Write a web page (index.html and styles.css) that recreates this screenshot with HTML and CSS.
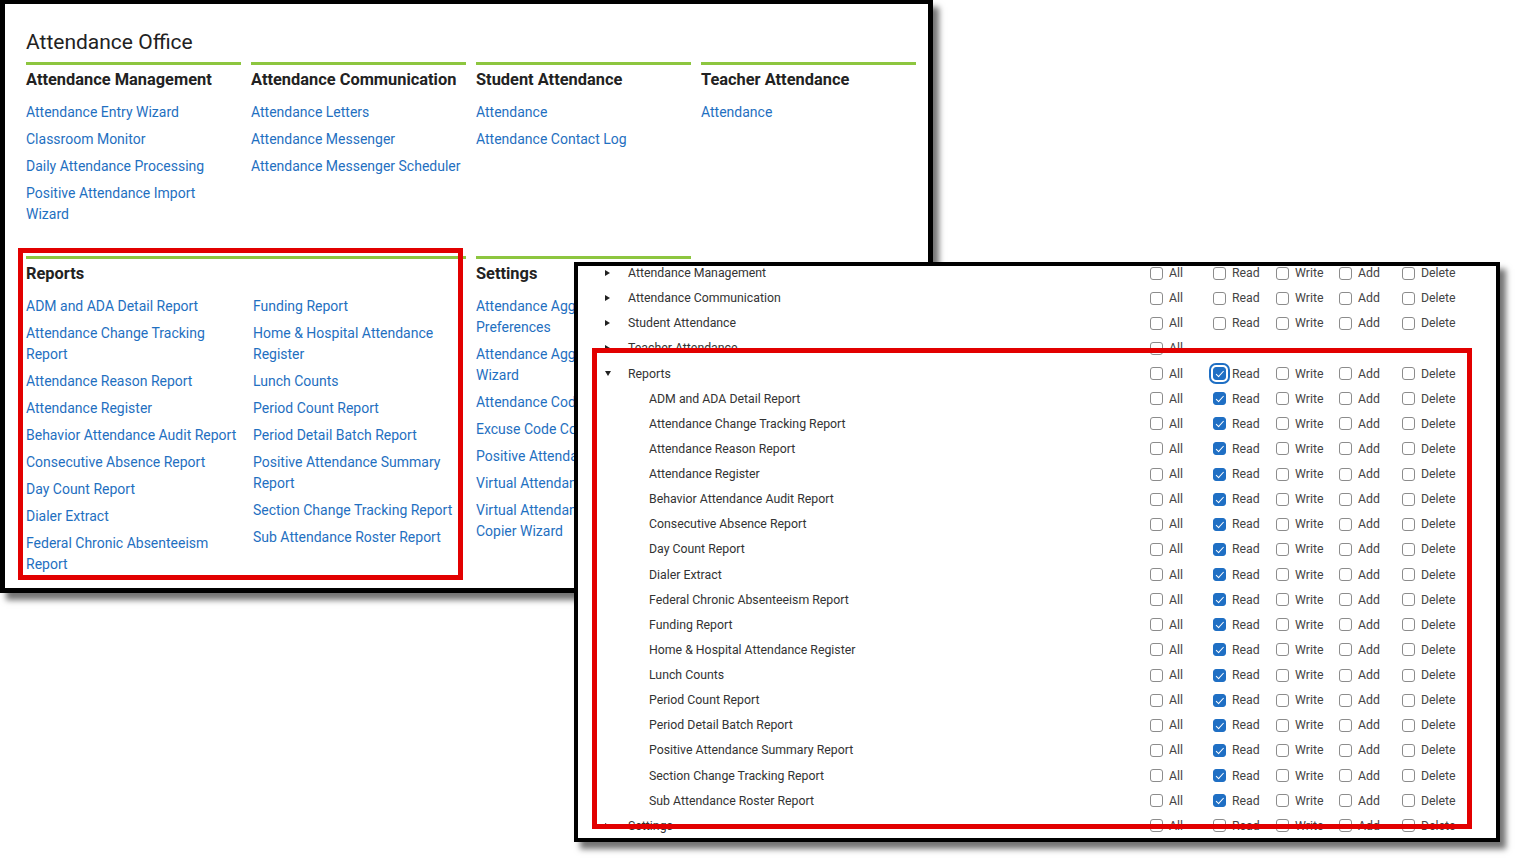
FILE: index.html
```html
<!DOCTYPE html>
<html>
<head>
  <meta charset="UTF-8">
  <title>Attendance Office Tool Rights</title>
  <link rel="stylesheet" href="styles.css">
</head>
<body>
  <div class="canvas">

    <!-- menu window -->
    <section class="window office">
      <h1 class="office-title">Attendance Office</h1>
      <div class="menu-grid">
        <div class="menu-group">
          <h2>Attendance Management</h2>
          <ul class="menu-links">
            <li><a href="#">Attendance Entry Wizard</a></li>
            <li><a href="#">Classroom Monitor</a></li>
            <li><a href="#">Daily Attendance Processing</a></li>
            <li><a href="#">Positive Attendance Import Wizard</a></li>
          </ul>
        </div>
        <div class="menu-group">
          <h2>Attendance Communication</h2>
          <ul class="menu-links">
            <li><a href="#">Attendance Letters</a></li>
            <li><a href="#">Attendance Messenger</a></li>
            <li><a href="#">Attendance Messenger Scheduler</a></li>
          </ul>
        </div>
        <div class="menu-group">
          <h2>Student Attendance</h2>
          <ul class="menu-links">
            <li><a href="#">Attendance</a></li>
            <li><a href="#">Attendance Contact Log</a></li>
          </ul>
        </div>
        <div class="menu-group">
          <h2>Teacher Attendance</h2>
          <ul class="menu-links">
            <li><a href="#">Attendance</a></li>
          </ul>
        </div>

        <div class="menu-group wide">
          <h2>Reports</h2>
          <div class="link-columns">
            <ul class="menu-links">
              <li><a href="#">ADM and ADA Detail Report</a></li>
              <li><a href="#">Attendance Change Tracking Report</a></li>
              <li><a href="#">Attendance Reason Report</a></li>
              <li><a href="#">Attendance Register</a></li>
              <li><a href="#">Behavior Attendance Audit Report</a></li>
              <li><a href="#">Consecutive Absence Report</a></li>
              <li><a href="#">Day Count Report</a></li>
              <li><a href="#">Dialer Extract</a></li>
              <li><a href="#">Federal Chronic Absenteeism Report</a></li>
            </ul>
            <ul class="menu-links">
              <li><a href="#">Funding Report</a></li>
              <li><a href="#">Home &amp; Hospital Attendance Register</a></li>
              <li><a href="#">Lunch Counts</a></li>
              <li><a href="#">Period Count Report</a></li>
              <li><a href="#">Period Detail Batch Report</a></li>
              <li><a href="#">Positive Attendance Summary Report</a></li>
              <li><a href="#">Section Change Tracking Report</a></li>
              <li><a href="#">Sub Attendance Roster Report</a></li>
            </ul>
          </div>
        </div>
        <div class="menu-group">
          <h2>Settings</h2>
          <ul class="menu-links narrow">
            <li><a href="#">Attendance Aggregation Preferences</a></li>
            <li><a href="#">Attendance Aggregation Wizard</a></li>
            <li><a href="#">Attendance Codes</a></li>
            <li><a href="#">Excuse Code Copier</a></li>
            <li><a href="#">Positive Attendance</a></li>
            <li><a href="#">Virtual Attendance</a></li>
            <li><a href="#">Virtual Attendance Copier Wizard</a></li>
          </ul>
        </div>
      </div>
      <div class="callout office-callout"></div>
    </section>

    <!-- tool rights window -->
    <section class="window rights">
      <div class="tree">
        <div class="tree-list">

          <div class="tree-row">
            <div class="tree-name"><span class="caret"></span>Attendance Management</div>
            <label class="perm"><input type="checkbox">All</label>
            <label class="perm"><input type="checkbox">Read</label>
            <label class="perm"><input type="checkbox">Write</label>
            <label class="perm"><input type="checkbox">Add</label>
            <label class="perm"><input type="checkbox">Delete</label>
          </div>
          <div class="tree-row">
            <div class="tree-name"><span class="caret"></span>Attendance Communication</div>
            <label class="perm"><input type="checkbox">All</label>
            <label class="perm"><input type="checkbox">Read</label>
            <label class="perm"><input type="checkbox">Write</label>
            <label class="perm"><input type="checkbox">Add</label>
            <label class="perm"><input type="checkbox">Delete</label>
          </div>
          <div class="tree-row">
            <div class="tree-name"><span class="caret"></span>Student Attendance</div>
            <label class="perm"><input type="checkbox">All</label>
            <label class="perm"><input type="checkbox">Read</label>
            <label class="perm"><input type="checkbox">Write</label>
            <label class="perm"><input type="checkbox">Add</label>
            <label class="perm"><input type="checkbox">Delete</label>
          </div>
          <div class="tree-row">
            <div class="tree-name"><span class="caret"></span>Teacher Attendance</div>
            <label class="perm"><input type="checkbox">All</label>
          </div>
          <div class="tree-row">
            <div class="tree-name"><span class="caret open"></span>Reports</div>
            <label class="perm"><input type="checkbox">All</label>
            <label class="perm"><input type="checkbox" class="focused" checked>Read</label>
            <label class="perm"><input type="checkbox">Write</label>
            <label class="perm"><input type="checkbox">Add</label>
            <label class="perm"><input type="checkbox">Delete</label>
          </div>

          <div class="tree-row child">
            <div class="tree-name">ADM and ADA Detail Report</div>
            <label class="perm"><input type="checkbox">All</label>
            <label class="perm"><input type="checkbox" checked>Read</label>
            <label class="perm"><input type="checkbox">Write</label>
            <label class="perm"><input type="checkbox">Add</label>
            <label class="perm"><input type="checkbox">Delete</label>
          </div>
          <div class="tree-row child">
            <div class="tree-name">Attendance Change Tracking Report</div>
            <label class="perm"><input type="checkbox">All</label>
            <label class="perm"><input type="checkbox" checked>Read</label>
            <label class="perm"><input type="checkbox">Write</label>
            <label class="perm"><input type="checkbox">Add</label>
            <label class="perm"><input type="checkbox">Delete</label>
          </div>
          <div class="tree-row child">
            <div class="tree-name">Attendance Reason Report</div>
            <label class="perm"><input type="checkbox">All</label>
            <label class="perm"><input type="checkbox" checked>Read</label>
            <label class="perm"><input type="checkbox">Write</label>
            <label class="perm"><input type="checkbox">Add</label>
            <label class="perm"><input type="checkbox">Delete</label>
          </div>
          <div class="tree-row child">
            <div class="tree-name">Attendance Register</div>
            <label class="perm"><input type="checkbox">All</label>
            <label class="perm"><input type="checkbox" checked>Read</label>
            <label class="perm"><input type="checkbox">Write</label>
            <label class="perm"><input type="checkbox">Add</label>
            <label class="perm"><input type="checkbox">Delete</label>
          </div>
          <div class="tree-row child">
            <div class="tree-name">Behavior Attendance Audit Report</div>
            <label class="perm"><input type="checkbox">All</label>
            <label class="perm"><input type="checkbox" checked>Read</label>
            <label class="perm"><input type="checkbox">Write</label>
            <label class="perm"><input type="checkbox">Add</label>
            <label class="perm"><input type="checkbox">Delete</label>
          </div>
          <div class="tree-row child">
            <div class="tree-name">Consecutive Absence Report</div>
            <label class="perm"><input type="checkbox">All</label>
            <label class="perm"><input type="checkbox" checked>Read</label>
            <label class="perm"><input type="checkbox">Write</label>
            <label class="perm"><input type="checkbox">Add</label>
            <label class="perm"><input type="checkbox">Delete</label>
          </div>
          <div class="tree-row child">
            <div class="tree-name">Day Count Report</div>
            <label class="perm"><input type="checkbox">All</label>
            <label class="perm"><input type="checkbox" checked>Read</label>
            <label class="perm"><input type="checkbox">Write</label>
            <label class="perm"><input type="checkbox">Add</label>
            <label class="perm"><input type="checkbox">Delete</label>
          </div>
          <div class="tree-row child">
            <div class="tree-name">Dialer Extract</div>
            <label class="perm"><input type="checkbox">All</label>
            <label class="perm"><input type="checkbox" checked>Read</label>
            <label class="perm"><input type="checkbox">Write</label>
            <label class="perm"><input type="checkbox">Add</label>
            <label class="perm"><input type="checkbox">Delete</label>
          </div>
          <div class="tree-row child">
            <div class="tree-name">Federal Chronic Absenteeism Report</div>
            <label class="perm"><input type="checkbox">All</label>
            <label class="perm"><input type="checkbox" checked>Read</label>
            <label class="perm"><input type="checkbox">Write</label>
            <label class="perm"><input type="checkbox">Add</label>
            <label class="perm"><input type="checkbox">Delete</label>
          </div>
          <div class="tree-row child">
            <div class="tree-name">Funding Report</div>
            <label class="perm"><input type="checkbox">All</label>
            <label class="perm"><input type="checkbox" checked>Read</label>
            <label class="perm"><input type="checkbox">Write</label>
            <label class="perm"><input type="checkbox">Add</label>
            <label class="perm"><input type="checkbox">Delete</label>
          </div>
          <div class="tree-row child">
            <div class="tree-name">Home &amp; Hospital Attendance Register</div>
            <label class="perm"><input type="checkbox">All</label>
            <label class="perm"><input type="checkbox" checked>Read</label>
            <label class="perm"><input type="checkbox">Write</label>
            <label class="perm"><input type="checkbox">Add</label>
            <label class="perm"><input type="checkbox">Delete</label>
          </div>
          <div class="tree-row child">
            <div class="tree-name">Lunch Counts</div>
            <label class="perm"><input type="checkbox">All</label>
            <label class="perm"><input type="checkbox" checked>Read</label>
            <label class="perm"><input type="checkbox">Write</label>
            <label class="perm"><input type="checkbox">Add</label>
            <label class="perm"><input type="checkbox">Delete</label>
          </div>
          <div class="tree-row child">
            <div class="tree-name">Period Count Report</div>
            <label class="perm"><input type="checkbox">All</label>
            <label class="perm"><input type="checkbox" checked>Read</label>
            <label class="perm"><input type="checkbox">Write</label>
            <label class="perm"><input type="checkbox">Add</label>
            <label class="perm"><input type="checkbox">Delete</label>
          </div>
          <div class="tree-row child">
            <div class="tree-name">Period Detail Batch Report</div>
            <label class="perm"><input type="checkbox">All</label>
            <label class="perm"><input type="checkbox" checked>Read</label>
            <label class="perm"><input type="checkbox">Write</label>
            <label class="perm"><input type="checkbox">Add</label>
            <label class="perm"><input type="checkbox">Delete</label>
          </div>
          <div class="tree-row child">
            <div class="tree-name">Positive Attendance Summary Report</div>
            <label class="perm"><input type="checkbox">All</label>
            <label class="perm"><input type="checkbox" checked>Read</label>
            <label class="perm"><input type="checkbox">Write</label>
            <label class="perm"><input type="checkbox">Add</label>
            <label class="perm"><input type="checkbox">Delete</label>
          </div>
          <div class="tree-row child">
            <div class="tree-name">Section Change Tracking Report</div>
            <label class="perm"><input type="checkbox">All</label>
            <label class="perm"><input type="checkbox" checked>Read</label>
            <label class="perm"><input type="checkbox">Write</label>
            <label class="perm"><input type="checkbox">Add</label>
            <label class="perm"><input type="checkbox">Delete</label>
          </div>
          <div class="tree-row child">
            <div class="tree-name">Sub Attendance Roster Report</div>
            <label class="perm"><input type="checkbox">All</label>
            <label class="perm"><input type="checkbox" checked>Read</label>
            <label class="perm"><input type="checkbox">Write</label>
            <label class="perm"><input type="checkbox">Add</label>
            <label class="perm"><input type="checkbox">Delete</label>
          </div>

          <div class="tree-row">
            <div class="tree-name"><span class="caret"></span>Settings</div>
            <label class="perm"><input type="checkbox">All</label>
            <label class="perm"><input type="checkbox">Read</label>
            <label class="perm"><input type="checkbox">Write</label>
            <label class="perm"><input type="checkbox">Add</label>
            <label class="perm"><input type="checkbox">Delete</label>
          </div>

        </div>
      </div>
      <div class="callout rights-callout"></div>
    </section>

  </div>
</body>
</html>
```

FILE: styles.css
```css
:root {
  --frame: #000000;
  --green: #8dc63f;
  --link: #1f70c1;
  --heading: #222222;
  --tree-text: #333333;
  --box-border: #8c8c8c;
  --checked: #1f6fc4;
  --callout: #e20000;
  --window-shadow: 6px 7px 6px rgba(0, 0, 0, 0.55);
}

body {
  margin: 0;
  background: #ffffff;
  font-family: Roboto, "Liberation Sans", Arial, sans-serif;
}

.canvas {
  position: relative;
  width: 1521px;
  height: 864px;
  overflow: hidden;
}

/* two screenshots layered on the canvas */
.window {
  position: absolute;
  box-sizing: border-box;
  background: #ffffff;
  border: 5px solid var(--frame);
  box-shadow: var(--window-shadow);
}

.office {
  left: 0;
  top: 0;
  width: 933px;
  height: 593px;
  border-top-width: 4px;
  padding: 25px 12px 0 21px;
}

.rights {
  left: 574px;
  top: 262px;
  width: 926px;
  height: 580px;
  border-width: 4px;
}

.callout {
  position: absolute;
  box-sizing: border-box;
  border: 5px solid var(--callout);
  pointer-events: none;
}

.office-callout {
  left: 13px;
  top: 244px;
  width: 445px;
  height: 332px;
}

.rights-callout {
  left: 14px;
  top: 82px;
  width: 880px;
  height: 481px;
}

/* menu */
.office-title {
  margin: 0 0 7px;
  font-size: 21px;
  line-height: 26px;
  font-weight: 400;
  color: var(--heading);
}

.menu-grid {
  display: grid;
  grid-template-columns: repeat(4, 215px);
  column-gap: 10px;
  row-gap: 31px;
  align-items: start;
}

.menu-group {
  border-top: 3px solid var(--green);
}

.menu-group.wide {
  grid-column: span 2;
}

.menu-group h2 {
  margin: 5px 0 0;
  font-size: 16.4px;
  line-height: 20px;
  font-weight: 700;
  color: var(--heading);
}

.link-columns {
  display: grid;
  grid-template-columns: 213px 1fr;
  column-gap: 14px;
}

.menu-links {
  list-style: none;
  margin: 12px 0 0;
  padding: 0;
  display: flex;
  flex-direction: column;
  gap: 6px;
}

.menu-links.narrow {
  max-width: 152px;
}

.menu-links a {
  font-size: 14px;
  line-height: 21px;
  color: var(--link);
  text-decoration: none;
}

/* tool rights tree */
.tree {
  height: 100%;
  overflow: hidden;
}

.tree-list {
  margin-top: -5.5px;
}

.tree-row {
  display: grid;
  grid-template-columns: 572px repeat(5, 63px);
  align-items: center;
  height: 25.14px;
  font-size: 12.3px;
  color: var(--tree-text);
}

.tree-name {
  display: flex;
  align-items: center;
  padding-left: 27px;
  white-space: nowrap;
}

.tree-row.child .tree-name {
  padding-left: 71px;
}

.caret {
  width: 0;
  height: 0;
  margin-right: 18px;
  border-left: 5px solid #222;
  border-top: 3px solid transparent;
  border-bottom: 3px solid transparent;
}

.caret.open {
  margin-right: 17px;
  border-left: 3.5px solid transparent;
  border-right: 3.5px solid transparent;
  border-top: 5px solid #222;
  border-bottom: 0;
}

.perm {
  display: flex;
  align-items: center;
  gap: 6px;
  color: #444;
  white-space: nowrap;
}

.perm input {
  appearance: none;
  -webkit-appearance: none;
  position: relative;
  box-sizing: border-box;
  width: 13px;
  height: 13px;
  margin: 0;
  border: 1px solid var(--box-border);
  border-radius: 3px;
  background: #ffffff;
}

.perm input:checked {
  background: var(--checked);
  border-color: var(--checked);
}

.perm input:checked::after {
  content: "";
  position: absolute;
  left: 3.5px;
  top: 1px;
  width: 3px;
  height: 6.5px;
  border: solid #ffffff;
  border-width: 0 1.6px 1.6px 0;
  transform: rotate(42deg);
}

.perm input.focused {
  outline: 2px solid var(--checked);
  outline-offset: 2px;
}
```
